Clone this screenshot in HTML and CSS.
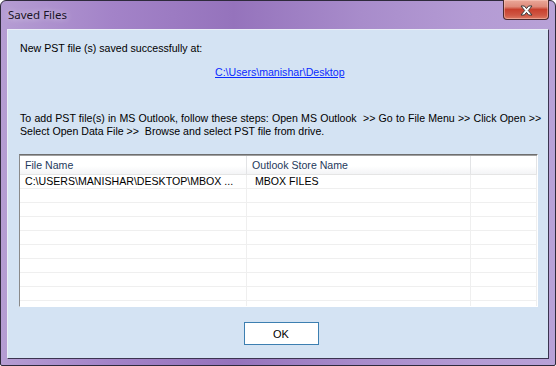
FILE: index.html
```html
<!DOCTYPE html>
<html lang="en">
<head>
    <meta charset="UTF-8">
    <title>Saved Files</title>
    <link rel="stylesheet" href="styles.css">
</head>
<body>
    <div class="window">
        <div class="titlebar">
            <span class="title">Saved Files</span>
            <button class="close-btn" aria-label="Close">
                <svg width="13" height="11" viewBox="0 0 13 11">
                    <path d="M1 1 H4.4 L6.5 3.6 L8.6 1 H12 L8.3 5.5 L12 10 H8.6 L6.5 7.4 L4.4 10 H1 L4.7 5.5 Z" fill="#ffffff" stroke="#3a3a3a" stroke-width="1" stroke-linejoin="round"/>
                </svg>
            </button>
        </div>
        <div class="client">
            <p class="msg">New PST file (s) saved successfully at:</p>
            <p class="path"><a href="#">C:\Users\manishar\Desktop</a></p>
            <p class="steps"><span class="wide">To add PST file(s) in MS Outlook, follow these steps: Open MS Outlook &nbsp;&gt;&gt; Go to File Menu &gt;&gt; Click Open &gt;&gt;</span><br>Select Open Data File &gt;&gt; &nbsp;Browse and select PST file from drive.</p>

            <div class="list">
                <div class="row head">
                    <div class="cell c1">File Name</div>
                    <div class="cell c2">Outlook Store Name</div>
                    <div class="cell c3"></div>
                </div>
                <div class="row">
                    <div class="cell c1">C:\USERS\MANISHAR\DESKTOP\MBOX ...</div>
                    <div class="cell c2">&nbsp;MBOX FILES</div>
                    <div class="cell c3"></div>
                </div>
                <div class="row"><div class="cell c1"></div><div class="cell c2"></div><div class="cell c3"></div></div>
                <div class="row"><div class="cell c1"></div><div class="cell c2"></div><div class="cell c3"></div></div>
                <div class="row"><div class="cell c1"></div><div class="cell c2"></div><div class="cell c3"></div></div>
                <div class="row"><div class="cell c1"></div><div class="cell c2"></div><div class="cell c3"></div></div>
                <div class="row"><div class="cell c1"></div><div class="cell c2"></div><div class="cell c3"></div></div>
                <div class="row"><div class="cell c1"></div><div class="cell c2"></div><div class="cell c3"></div></div>
                <div class="row"><div class="cell c1"></div><div class="cell c2"></div><div class="cell c3"></div></div>
                <div class="row"><div class="cell c1"></div><div class="cell c2"></div><div class="cell c3"></div></div>
                <div class="row"><div class="cell c1"></div><div class="cell c2"></div><div class="cell c3"></div></div>
            </div>

            <div class="actions">
                <button class="ok-btn">OK</button>
            </div>
        </div>
    </div>
</body>
</html>
```

FILE: styles.css
```css
html, body {
    margin: 0;
    padding: 0;
    background-color: #ffffff;
}

body {
    width: 556px;
    height: 366px;
    overflow: hidden;
}

.window {
    box-sizing: border-box;
    width: 556px;
    height: 366px;
    display: flex;
    flex-direction: column;
    border: 1px solid #2e2a3c;
    border-radius: 6px 6px 2px 2px;
    background: linear-gradient(90deg, #b59dd3 0%, #a383c8 20%, #9573bc 42%, #a88ccb 65%, #b49bd4 85%, #b8a1d7 100%);
    padding: 0 6px 6px 6px;
}

.titlebar {
    height: 28px;
    display: flex;
    align-items: flex-start;
    justify-content: space-between;
}

.title {
    font-family: "Noto Sans", sans-serif;
    font-size: 11.5px;
    color: #1a1426;
    padding: 6px 0 0 1px;
    text-shadow: 0 0 6px rgba(255, 255, 255, 0.7);
}

.close-btn {
    width: 46px;
    height: 20px;
    margin: -1px 0 0 0;
    padding: 0;
    border: 1px solid #4a2a2e;
    border-top: none;
    border-radius: 0 0 4px 4px;
    background: linear-gradient(180deg, #eaa899 0%, #df8a7a 35%, #c8402e 50%, #cf5744 80%, #dd7a64 100%);
    display: flex;
    align-items: center;
    justify-content: center;
    box-shadow: inset 0 0 0 1px rgba(255, 210, 200, 0.45);
}

.close-btn svg {
    display: block;
    margin-top: 1px;
}

.client {
    flex: 1;
    background-color: #d4e3f3;
    border: 1px solid;
    border-color: #e9edf7 #3b3450 #3b3450 #e9edf7;
    font-family: "Liberation Sans", Arial, sans-serif;
    font-size: 10.6px;
    color: #000000;
    display: flex;
    flex-direction: column;
}

.client p {
    margin: 0;
    line-height: 13px;
    white-space: nowrap;
}

.msg {
    padding: 12px 0 0 12px;
}

.path {
    padding: 11px 0 0 207px;
}

.path a {
    color: #0a2bff;
    text-decoration: underline;
}

.steps {
    padding: 33px 0 0 12px;
}

.steps .wide {
    word-spacing: 0.25px;
}

.list {
    margin: 16px 10px 0 11px;
    height: 151px;
    overflow: hidden;
    background-color: #ffffff;
    border: 1px solid;
    border-color: #6e6e6e #ffffff #ffffff #8a8a8a;
    box-shadow: inset 0 1px 0 #a0a0a0;
}

.row {
    display: flex;
    height: 13px;
    border-bottom: 1px solid #efefef;
}

.row.head {
    height: 18px;
    margin-top: 1px;
    background: linear-gradient(180deg, #ffffff 0%, #ffffff 55%, #f3f4f6 100%);
    border-bottom: 1px solid #e5e5e5;
}

.cell {
    box-sizing: border-box;
    height: 100%;
    padding-left: 5px;
    line-height: 13px;
    white-space: nowrap;
    overflow: hidden;
    border-right: 1px solid #efefef;
}

.head .cell {
    line-height: 18px;
    color: #1e395b;
    border-right-color: #e3e4e6;
}

.c1 {
    width: 227px;
}

.c2 {
    width: 224px;
}

.c3 {
    flex: 1;
}

.actions {
    display: flex;
    justify-content: center;
    padding: 15px 0 0 6px;
}

.ok-btn {
    width: 75px;
    height: 23px;
    background-color: #ffffff;
    border: 1px solid #3c7fb1;
    border-radius: 0;
    font-family: "Liberation Sans", Arial, sans-serif;
    font-size: 11px;
    color: #000000;
    padding: 0;
}
```
